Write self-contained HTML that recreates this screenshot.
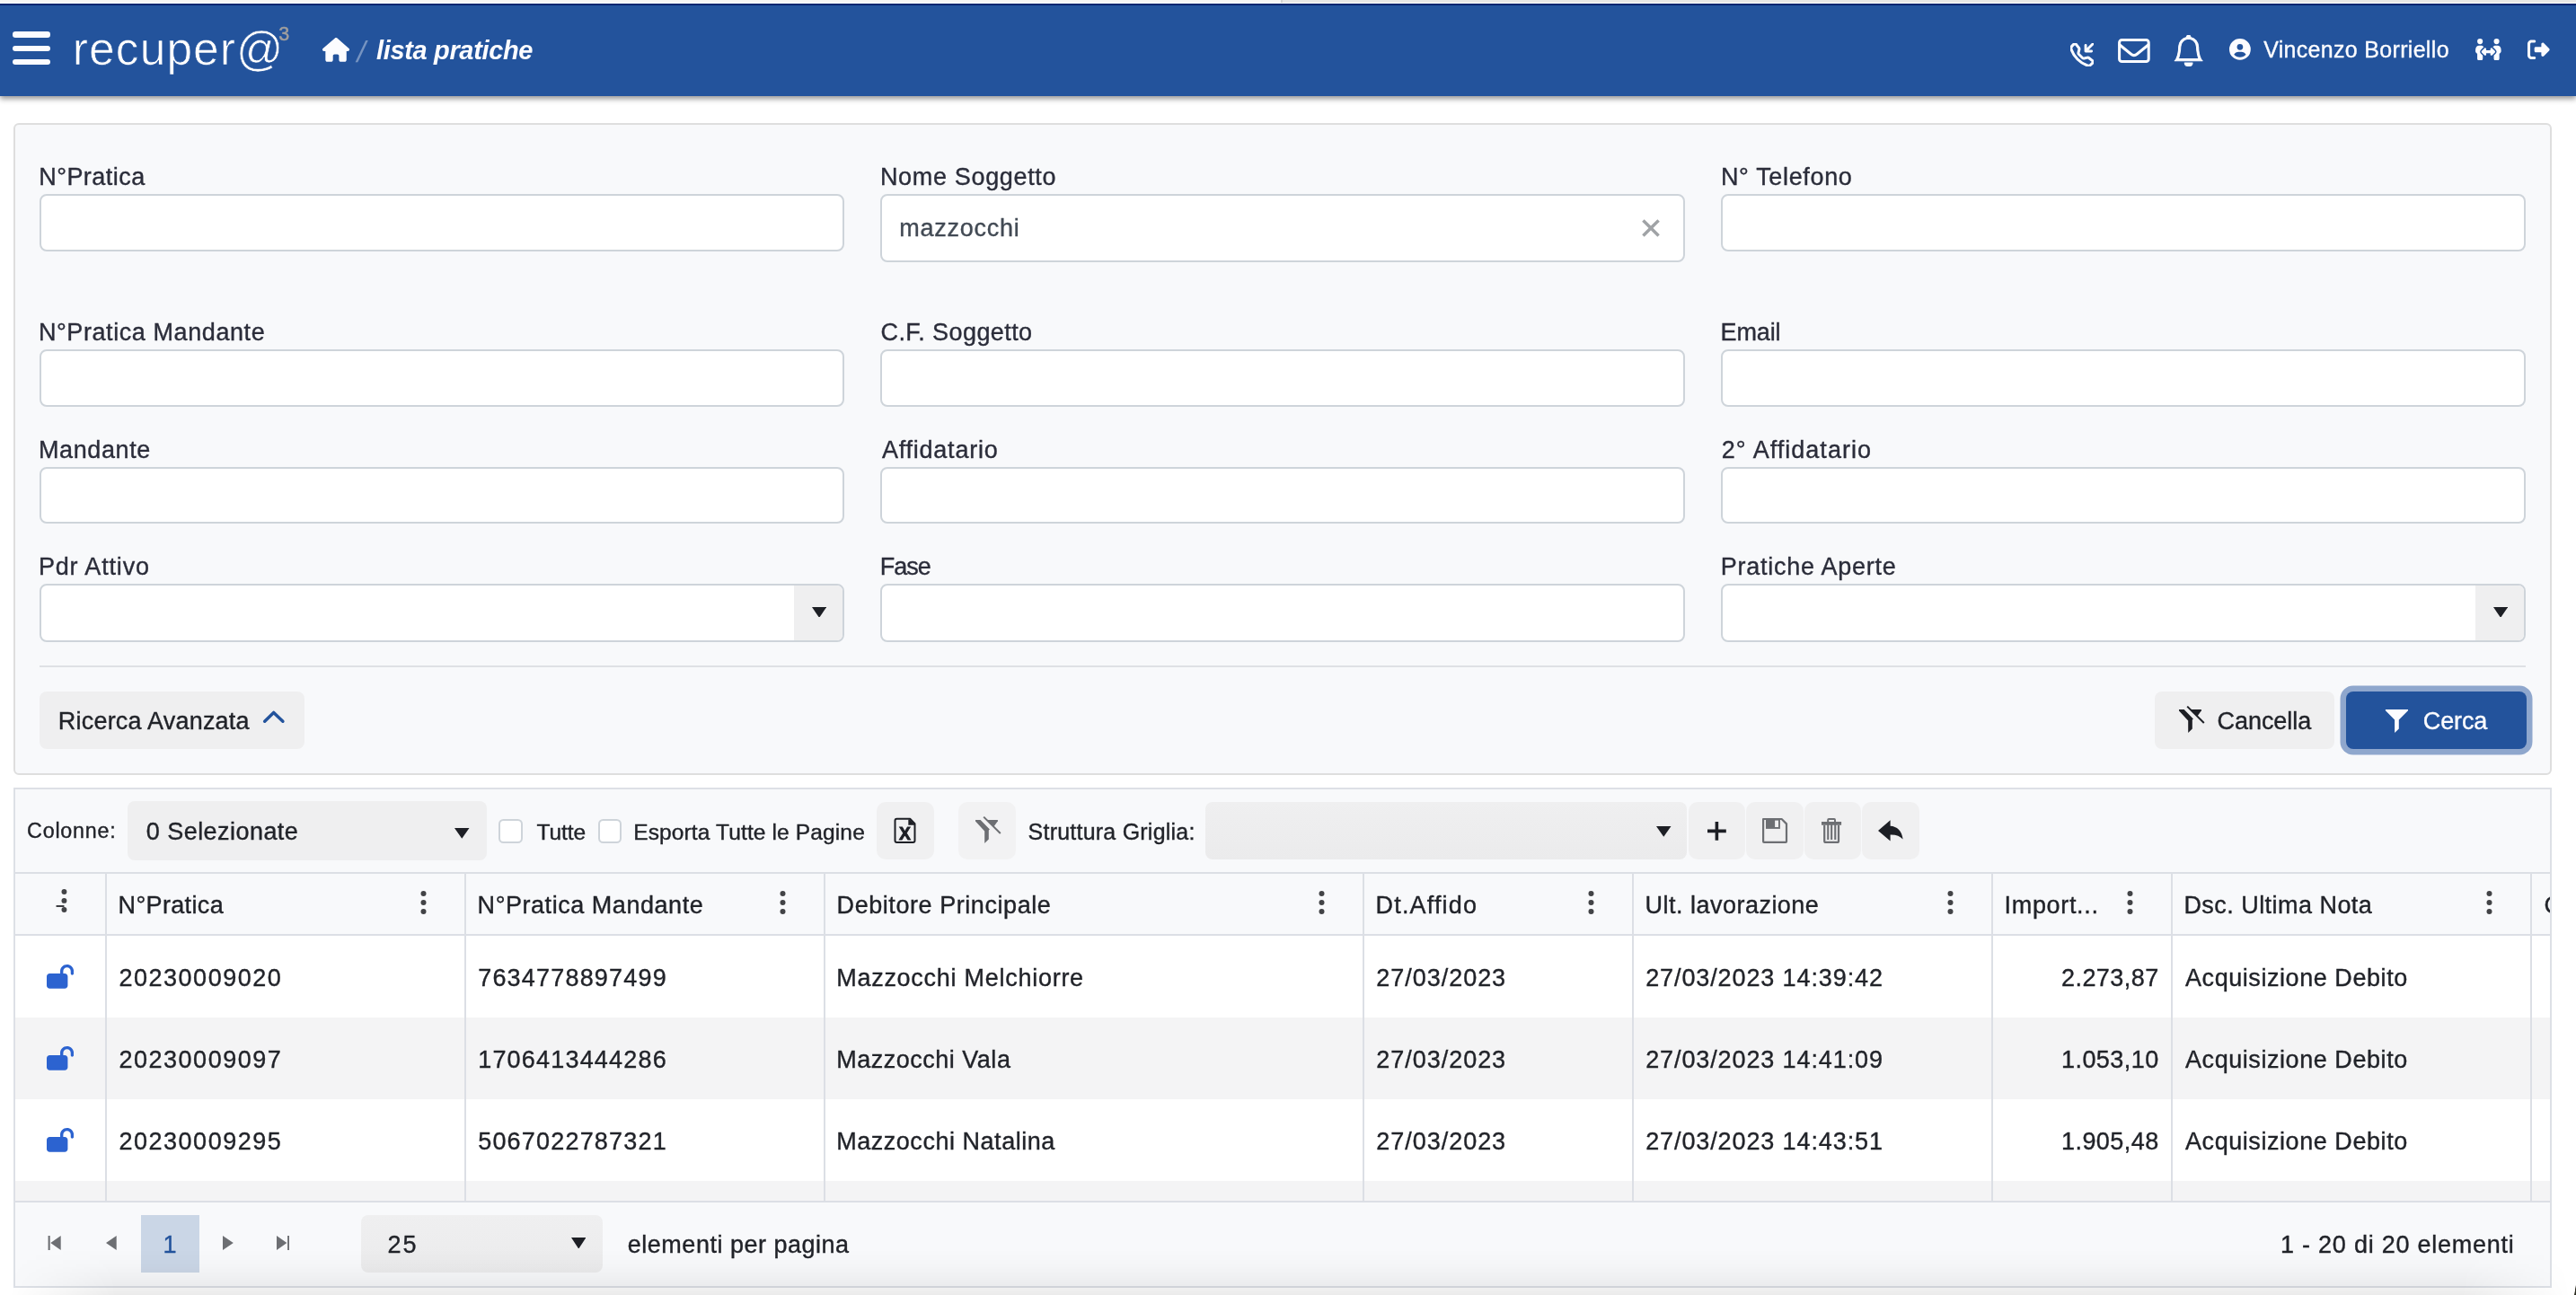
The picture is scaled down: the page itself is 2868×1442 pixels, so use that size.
<!DOCTYPE html>
<html lang="it">
<head>
<meta charset="utf-8">
<title>recuper@ - lista pratiche</title>
<style>
html,body{margin:0;padding:0;}
body{width:2868px;height:1442px;overflow:hidden;background:#fff;font-family:"Liberation Sans", sans-serif;position:relative;}
.b{position:absolute;box-sizing:border-box;display:block;}
.t{position:absolute;white-space:pre;display:block;-webkit-text-stroke:0.36px currentColor;}
.inp{background:#fff;border:2px solid #ced4da;border-radius:8px;}
.btn{background:#efeff0;border-radius:8px;}
th,td{padding:0;font-weight:normal;text-align:left;}
.panel{background:#f8f9fb;border:2px solid #dedede;border-radius:6px;}
</style>
</head>
<body>
<div id="app" class="b" style="left:0;top:0;width:2868px;height:1442px;will-change:transform">
<header class="b" style="left:0;top:0">
<div class="b " style="left:0px;top:0px;width:2868px;height:107px;background:#23539c;box-shadow:0 2.500px 6px rgba(0,0,0,.42);"></div>
<div class="b " style="left:0px;top:0px;width:2868px;height:4px;background:#fff"></div>
<div class="b " style="left:0px;top:0px;width:1426px;height:2.7px;background:#f5f5f3"></div>
<div class="b " style="left:1426px;top:0px;width:1442px;height:2.7px;background:#e7e7e5"></div>
<div class="b " style="left:1426px;top:0px;width:2px;height:2.7px;background:#d3d3d1"></div>
<div class="b " style="left:0px;top:4px;width:2868px;height:1.6px;background:#00256f"></div>
<div class="b " style="left:14px;top:35.4px;width:42px;height:6.3px;background:#fcfcff;border-radius:3.2px"></div>
<div class="b " style="left:14px;top:50.5px;width:42px;height:6.3px;background:#fcfcff;border-radius:3.2px"></div>
<div class="b " style="left:14px;top:65.6px;width:42px;height:6.3px;background:#fcfcff;border-radius:3.2px"></div>
<svg class="b" style="left:70px;top:20px" width="270" height="70" viewBox="0 0 270 70"><text x="10.8" y="51.7" font-family='"Liberation Sans", sans-serif' font-size="51.5" fill="#fff" stroke="#23539c" stroke-width="0.7" letter-spacing="1.1">recuper@</text><text x="240.2" y="25.4" font-family='"Liberation Sans", sans-serif' font-size="21.5" fill="#a09f9e" stroke="#a09f9e" stroke-width="0.5">3</text></svg>
<svg class="b" style="left:358.7px;top:42.4px;" width="30.1" height="26.75" viewBox="0 0 576 512"><path fill="#fcfcff" d="M575.8 255.5c0 18-15 32.1-32 32.1h-32l.7 160.2c0 2.700-.2 5.400-.5 8.100V472c0 22.100-17.900 40-40 40H456c-1.100 0-2.200 0-3.300-.1c-1.400.1-2.800.1-4.200.1H416 392c-22.100 0-40-17.900-40-40V448 384c0-17.700-14.300-32-32-32H256c-17.700 0-32 14.300-32 32v64 24c0 22.100-17.900 40-40 40H160 128.100c-1.500 0-3-.1-4.500-.2c-1.200.1-2.400.2-3.600.2H104c-22.100 0-40-17.900-40-40V360c0-.9 0-1.900.1-2.800V287.600H32c-18 0-32-14-32-32.100c0-9 3-17 10-24L266.400 8c7-7 15-8 22-8s15 2 21 7L564.800 231.500c8 7 12 15 11 24z"/></svg>
<span class="t raw" style="left:396.4px;top:42.17px;font-size:33px;line-height:32px;color:rgba(255,255,255,.38);transform:skewX(-11.500deg);transform-origin:0 80%;-webkit-text-stroke:0;">/</span>
<span class="t raw" style="left:419px;top:39.95px;font-size:29px;line-height:32px;color:#fcfcff;letter-spacing:-0.34px;font-weight:bold;font-style:italic;-webkit-text-stroke:0;">lista pratiche</span>
<svg class="b" style="left:2304.8px;top:47.6px;" width="26" height="26" viewBox="0 0 16 16"><path fill="#fcfcff" stroke="#fcfcff" stroke-width=".8" stroke-linejoin="round" d="M15.854.146a.5.5 0 0 1 0 .708L11.707 5H14.5a.5.5 0 0 1 0 1h-4a.5.5 0 0 1-.5-.5v-4a.5.5 0 0 1 1 0v2.793L15.146.146a.5.5 0 0 1 .708 0zm-12.2 1.182a.678.678 0 0 0-1.015-.063L1.605 2.3c-.483.484-.661 1.169-.45 1.77a17.568 17.568 0 0 0 4.168 6.608 17.569 17.569 0 0 0 6.608 4.168c.601.211 1.286.033 1.77-.45l1.034-1.034a.678.678 0 0 0-.063-1.015l-2.307-1.794a.678.678 0 0 0-.58-.122l-2.19.547a1.745 1.745 0 0 1-1.657-.459L5.482 8.062a1.745 1.745 0 0 1-.46-1.657l.548-2.19a.678.678 0 0 0-.122-.58L3.654 1.328zM1.884.511a1.745 1.745 0 0 1 2.612.163L6.29 2.98c.329.423.445.974.315 1.494l-.547 2.19a.678.678 0 0 0 .178.643l2.457 2.457a.678.678 0 0 0 .644.178l2.189-.547a1.745 1.745 0 0 1 1.494.315l2.306 1.794c.829.645.905 1.87.163 2.611l-1.034 1.034c-.74.74-1.846 1.065-2.877.702a18.634 18.634 0 0 1-7.01-4.42 18.634 18.634 0 0 1-4.42-7.009c-.362-1.03-.037-2.137.703-2.877L1.885.511z"/></svg>
<svg class="b" style="left:2356px;top:40px;" width="40" height="32" viewBox="2356 40 40 32"><rect x="2359.6" y="44.5" width="32.6" height="24.050" rx="2.800" fill="none" stroke="#fcfcff" stroke-width="3.050"/><path d="M2360,50 L2372.6,60.200 Q2375.9,62.900 2379.2,60.200 L2391.8,50" fill="none" stroke="#fcfcff" stroke-width="3.050" stroke-linejoin="round" stroke-linecap="round"/></svg>
<svg class="b" style="left:2419.1px;top:38.8px;" width="35.3" height="35.3" viewBox="0 0 16 16"><path fill="#fcfcff" stroke="#fcfcff" stroke-width=".46" stroke-linejoin="round" d="M8 16a2 2 0 0 0 2-2H6a2 2 0 0 0 2 2zM8 1.918l-.797.161A4.002 4.002 0 0 0 4 6c0 .628-.134 2.197-.459 3.742-.16.767-.376 1.566-.663 2.258h10.244c-.287-.692-.502-1.49-.663-2.258C12.134 8.197 12 6.628 12 6a4.002 4.002 0 0 0-3.203-3.92L8 1.917zM14.22 12c.223.447.481.801.78 1H1c.299-.199.557-.553.78-1C2.68 10.200 3 6.880 3 6c0-2.420 1.720-4.440 4.005-4.901a1 1 0 1 1 1.990 0A5.002 5.002 0 0 1 13 6c0 .880.320 4.200 1.220 6z"/></svg>
<svg class="b" style="left:2481.9px;top:42.9px;" width="23.8" height="23.8" viewBox="0 0 512 512"><path fill="#fcfcff" d="M399 384.200C376.900 345.800 335.400 320 288 320H224c-47.400 0-88.900 25.800-111 64.200c35.200 39.200 86.200 63.800 143 63.800s107.800-24.700 143-63.800zM0 256a256 256 0 1 1 512 0A256 256 0 1 1 0 256zm256 16a72 72 0 1 0 0-144 72 72 0 1 0 0 144z"/></svg>
<span class="t " style="left:2520.2px;top:39.11px;font-size:24.94px;line-height:32px;color:#fcfcff;letter-spacing:0.34px;">Vincenzo Borriello</span>
<svg class="b" style="left:2754.86px;top:42.7px;" width="30.72" height="24.58" viewBox="0 0 640 512"><path fill="#fcfcff" d="M64 64a64 64 0 1 1 128 0A64 64 0 1 1 64 64zM25.900 233.400C29.300 191.900 64 160 105.600 160h44.800c27 0 51 13.400 65.500 34.100c-2.700 1.900-5.200 4-7.500 6.300l-64 64c-21.900 21.900-21.900 57.300 0 79.200L192 391.200V464c0 26.500-21.500 48-48 48H112c-26.500 0-48-21.500-48-48V348.300c-26.500-9.500-44.700-35.800-42.200-65.600l4.100-49.300zM448 64a64 64 0 1 1 128 0A64 64 0 1 1 448 64zM431.600 200.400c-2.300-2.300-4.900-4.400-7.500-6.300c14.500-20.700 38.600-34.100 65.500-34.100h44.800c41.600 0 76.300 31.900 79.700 73.400l4.100 49.300c2.500 29.800-15.700 56.100-42.200 65.600V464c0 26.500-21.500 48-48 48H496c-26.500 0-48-21.500-48-48V391.200l47.600-47.600c21.900-21.900 21.900-57.300 0-79.200l-64-64zM272 240v32h96V240c0-9.700 5.800-18.500 14.800-22.200s19.300-1.700 26.200 5.200l64 64c9.400 9.400 9.400 24.600 0 33.900l-64 64c-6.900 6.900-17.200 8.900-26.200 5.200s-14.800-12.500-14.800-22.200V336H272v32c0 9.700-5.800 18.500-14.800 22.200s-19.300 1.700-26.200-5.200l-64-64c-9.400-9.400-9.400-24.600 0-33.900l64-64c6.900-6.900 17.200-8.900 26.200-5.200s14.800 12.500 14.800 22.200z"/></svg>
<svg class="b" style="left:2814.3px;top:42.66px;" width="24.6" height="24.6" viewBox="0 0 512 512"><path fill="#fcfcff" d="M377.9 105.900L500.700 228.700c7.200 7.200 11.300 17.100 11.300 27.300s-4.100 20.100-11.300 27.300L377.900 406.100c-6.400 6.400-15 9.900-24 9.900c-18.700 0-33.900-15.200-33.900-33.900l0-62.100-128 0c-17.700 0-32-14.300-32-32l0-64c0-17.700 14.300-32 32-32l128 0 0-62.100c0-18.700 15.200-33.900 33.900-33.900c9 0 17.600 3.600 24 9.900zM160 96L96 96c-17.700 0-32 14.300-32 32l0 256c0 17.700 14.300 32 32 32l64 0c17.700 0 32 14.300 32 32s-14.300 32-32 32l-64 0c-53 0-96-43-96-96L0 128C0 75 43 32 96 32l64 0c17.700 0 32 14.300 32 32s-14.300 32-32 32z"/></svg>
</header>
<form class="b" style="left:0;top:0" onsubmit="return false">
<div class="b panel" style="left:15px;top:137px;width:2826px;height:726px;"></div>
<label class="t lbl" style="left:43.199999999999996px;top:180.74px;font-size:27.0px;line-height:32px;color:#2b2d3a;letter-spacing:0.46px;">N°Pratica</label>
<div class="b inp" style="left:44px;top:216.4px;width:896px;height:63.2px;"></div>
<label class="t lbl" style="left:979.9px;top:180.74px;font-size:27.0px;line-height:32px;color:#2b2d3a;letter-spacing:0.67px;">Nome Soggetto</label>
<div class="b inp" style="left:980px;top:216.4px;width:896px;height:75.2px;"></div>
<label class="t lbl" style="left:1915.9px;top:180.74px;font-size:27.0px;line-height:32px;color:#2b2d3a;letter-spacing:0.66px;">N° Telefono</label>
<div class="b inp" style="left:1916px;top:216.4px;width:896px;height:63.2px;"></div>
<label class="t lbl" style="left:42.9px;top:353.74px;font-size:27.0px;line-height:32px;color:#2b2d3a;letter-spacing:0.58px;">N°Pratica Mandante</label>
<div class="b inp" style="left:44px;top:389.4px;width:896px;height:63.2px;"></div>
<label class="t lbl" style="left:980.5px;top:353.74px;font-size:27.0px;line-height:32px;color:#2b2d3a;letter-spacing:0.42px;">C.F. Soggetto</label>
<div class="b inp" style="left:980px;top:389.4px;width:896px;height:63.2px;"></div>
<label class="t lbl" style="left:1915.5px;top:353.74px;font-size:27.0px;line-height:32px;color:#2b2d3a;letter-spacing:-0.12px;">Email</label>
<div class="b inp" style="left:1916px;top:389.4px;width:896px;height:63.2px;"></div>
<label class="t lbl" style="left:42.9px;top:484.74px;font-size:27.0px;line-height:32px;color:#2b2d3a;letter-spacing:0.63px;">Mandante</label>
<div class="b inp" style="left:44px;top:520.3px;width:896px;height:63.2px;"></div>
<label class="t lbl" style="left:982.0px;top:484.74px;font-size:27.0px;line-height:32px;color:#2b2d3a;letter-spacing:0.76px;">Affidatario</label>
<div class="b inp" style="left:980px;top:520.3px;width:896px;height:63.2px;"></div>
<label class="t lbl" style="left:1916.8000000000002px;top:484.74px;font-size:27.0px;line-height:32px;color:#2b2d3a;letter-spacing:1.02px;">2° Affidatario</label>
<div class="b inp" style="left:1916px;top:520.3px;width:896px;height:63.2px;"></div>
<label class="t lbl" style="left:42.9px;top:614.74px;font-size:27.0px;line-height:32px;color:#2b2d3a;letter-spacing:0.84px;">Pdr Attivo</label>
<div class="b inp" style="left:44px;top:650.1px;width:896px;height:64.6px;"><span class="b" style="right:0;top:0;width:54px;height:60.6px;background:#efeff0;border-radius:0 6px 6px 0"></span><svg class="b" style="right:17.600px;top:23.500px" width="16.200" height="11.900" viewBox="0 0 16.200 11.900"><path fill="#1d1f25" d="M0 0H16.200L8.100 11.900Z"/></svg></div>
<label class="t lbl" style="left:979.8px;top:614.74px;font-size:27.0px;line-height:32px;color:#2b2d3a;letter-spacing:-1.01px;">Fase</label>
<div class="b inp" style="left:980px;top:650.1px;width:896px;height:64.6px;"></div>
<label class="t lbl" style="left:1915.8000000000002px;top:614.74px;font-size:27.0px;line-height:32px;color:#2b2d3a;letter-spacing:0.74px;">Pratiche Aperte</label>
<div class="b inp" style="left:1916px;top:650.1px;width:896px;height:64.6px;"><span class="b" style="right:0;top:0;width:54px;height:60.6px;background:#efeff0;border-radius:0 6px 6px 0"></span><svg class="b" style="right:17.600px;top:23.500px" width="16.200" height="11.900" viewBox="0 0 16.200 11.900"><path fill="#1d1f25" d="M0 0H16.200L8.100 11.900Z"/></svg></div>
<span class="t " style="left:1001.2px;top:238.44px;font-size:27.0px;line-height:32px;color:#424a54;letter-spacing:0.76px;">mazzocchi</span>
<svg class="b" style="left:1828px;top:244.2px;" width="20" height="20" viewBox="0 0 20 20"><path d="M1.400 1.400L18.600 18.600M18.600 1.400L1.400 18.600" stroke="#a0a3a6" stroke-width="3.500" fill="none"/></svg>
<div class="b " style="left:44px;top:741px;width:2768px;height:2px;background:#dfe1e5"></div>
<div class="b btn" style="left:44px;top:770.2px;width:295px;height:63.4px;"></div>
<span class="t " style="left:64.8px;top:786.94px;font-size:27.0px;line-height:32px;color:#212329;letter-spacing:0.21px;">Ricerca Avanzata</span>
<svg class="b" style="left:288px;top:788px;" width="34" height="22" viewBox="288 788 34 22"><path d="M294.700,803.200 L304.700,793.400 L314.900,803.200" stroke="#23539c" stroke-width="3.500" stroke-linecap="round" stroke-linejoin="round" fill="none"/></svg>
<div class="b btn" style="left:2399px;top:770.2px;width:200px;height:63.4px;"></div>
<svg class="b" style="left:2420px;top:780px;" width="40" height="40" viewBox="2420 780 40 40"><path fill="#1d1f25" d="M2426,790 H2431.6 L2441.9,800.400 L2440.8,801.400 V811.600 L2436.2,815.900 V802.400 L2426,791.500 Z"/><path fill="#1d1f25" d="M2439,790 H2450.9 V791.200 L2446.4,797.400 Z"/><path d="M2435.2,786.600 L2453.800,805" stroke="#1d1f25" stroke-width="2" fill="none"/></svg>
<span class="t " style="left:2468.6px;top:786.94px;font-size:27.0px;line-height:32px;color:#212329;letter-spacing:-0.07px;">Cancella</span>
<div class="b " style="left:2612px;top:770.2px;width:200.5px;height:63.4px;background:#23539c;border-radius:8px;box-shadow:0 0 0 6.500px #8fa7cd;"></div>
<svg class="b" style="left:2650px;top:785px;" width="36" height="36" viewBox="2650 785 36 36"><path fill="#fcfcff" d="M2655.9,790 H2681 V791.200 L2670.8,801.600 V811.500 L2666.1,816 V801.600 L2655.9,791.200 Z"/></svg>
<span class="t " style="left:2697.8px;top:786.94px;font-size:27.0px;line-height:32px;color:#fcfcff;letter-spacing:-0.13px;">Cerca</span>
</form>
<section class="b" style="left:0;top:0;width:2868px">
<div class="b " style="left:15px;top:877px;width:2826px;height:556.5px;background:#f8f9fb;border:2px solid #dde0e6;"></div>
<span class="t " style="left:30.1px;top:908.54px;font-size:23.27px;line-height:32px;color:#212329;letter-spacing:0.78px;">Colonne:</span>
<div class="b btn" style="left:142px;top:892px;width:400px;height:65.5px;"></div>
<span class="t " style="left:162.8px;top:909.64px;font-size:27.0px;line-height:32px;color:#212329;letter-spacing:0.45px;">0 Selezionate</span>
<svg class="b" style="left:506px;top:922px;" width="16.5" height="11.8" viewBox="0 0 16.500 11.800"><path fill="#1d1f25" d="M0 0H16.500L8.250 11.800Z"/></svg>
<div class="b " style="left:555.4px;top:912.4px;width:26.2px;height:26.4px;background:#fff;border:2px solid #ced4da;border-radius:5.500px"></div>
<span class="t " style="left:597.4px;top:910.99px;font-size:24.55px;line-height:32px;color:#212329;letter-spacing:-0.06px;">Tutte</span>
<div class="b " style="left:666.2px;top:912.4px;width:26.2px;height:26.4px;background:#fff;border:2px solid #ced4da;border-radius:5.500px"></div>
<span class="t " style="left:705.2px;top:910.99px;font-size:24.55px;line-height:32px;color:#212329;letter-spacing:0.11px;">Esporta Tutte le Pagine</span>
<div class="b " style="left:976.2px;top:893px;width:64px;height:64px;background:#f0f0f1;border-radius:10px"></div>
<svg class="b" style="left:990px;top:905px" width="36" height="40" viewBox="990 905 36 40"><path d="M998.500,911.800 H1013.200 L1018.500,917.100 V936 Q1018.500,938 1016.500,938 H998.500 Q996.500,938 996.500,936 V913.800 Q996.500,911.800 998.500,911.800 Z" fill="none" stroke="#1d1f25" stroke-width="2" stroke-linejoin="round"/><path d="M1011.300,912.600 H1013 L1018.500,918.100 V918.800 H1011.300 Z" fill="#1d1f25"/><text x="1007.400" y="934.600" text-anchor="middle" font-family='"Liberation Sans", sans-serif' font-weight="bold" font-size="19.300" fill="#1d1f25" stroke="#1d1f25" stroke-width="0.9">X</text></svg>
<div class="b " style="left:1067px;top:893px;width:64px;height:64px;background:#f2f2f3;border-radius:10px"></div>
<svg class="b" style="left:1080px;top:902.75px;" width="40" height="40" viewBox="2420 780 40 40"><path fill="#6d6f73" d="M2426,790 H2431.6 L2441.9,800.400 L2440.8,801.400 V811.600 L2436.2,815.900 V802.400 L2426,791.500 Z"/><path fill="#6d6f73" d="M2439,790 H2450.9 V791.200 L2446.4,797.400 Z"/><path d="M2435.2,786.600 L2453.800,805" stroke="#6d6f73" stroke-width="2" fill="none"/></svg>
<span class="t " style="left:1144.6px;top:909.86px;font-size:24.94px;line-height:32px;color:#212329;letter-spacing:0.25px;">Struttura Griglia:</span>
<div class="b " style="left:1342px;top:893px;width:536px;height:64px;background:linear-gradient(#efeff0,#ebebec);border-radius:8px"></div>
<svg class="b" style="left:1844px;top:920px;" width="16.5" height="11.8" viewBox="0 0 16.500 11.800"><path fill="#1d1f25" d="M0 0H16.500L8.250 11.800Z"/></svg>
<div class="b " style="left:1879.5px;top:893px;width:63.6px;height:64px;background:#f0f0f1;border-radius:10px"></div>
<div class="b " style="left:1944.3px;top:893px;width:63.6px;height:64px;background:#f0f0f1;border-radius:10px"></div>
<div class="b " style="left:2008.8px;top:893px;width:63.6px;height:64px;background:#f0f0f1;border-radius:10px"></div>
<div class="b " style="left:2073.2px;top:893px;width:63.6px;height:64px;background:#f0f0f1;border-radius:10px"></div>
<svg class="b" style="left:1901px;top:915px;" width="20.8" height="20.8" viewBox="0 0 20.800 20.800"><path d="M10.400 0V20.800M0 10.400H20.800" stroke="#1d1f25" stroke-width="3.600" fill="none"/></svg>
<svg class="b" style="left:1955px;top:905px;" width="42" height="40" viewBox="1955 905 42 40"><path d="M1963.100,912 H1983.600 L1989,917.400 V937 Q1989,937.900 1988.100,937.900 H1964 Q1963.100,937.900 1963.100,937 Z" fill="none" stroke="#6d6f73" stroke-width="2.200" stroke-linejoin="round"/><path fill="#6d6f73" d="M1966,912.500 H1981.900 V922.900 H1966 Z"/><path fill="#f0f0f1" d="M1976.100,913.600 H1980 V921 H1976.100 Z"/></svg>
<svg class="b" style="left:2020px;top:905px;" width="40" height="40" viewBox="2020 905 40 40"><path d="M2035.200,915.500 V912.900 Q2035.200,912 2036.100,912 H2042.100 Q2043,912 2043,912.900 V915.500" fill="none" stroke="#6d6f73" stroke-width="2"/><path fill="#6d6f73" d="M2028,915.100 H2050.100 V918.800 H2028 Z M2034.200,918.800 H2036.300 V934.900 H2034.200 Z M2038.100,918.800 H2040.200 V934.900 H2038.100 Z M2042.200,918.800 H2044.300 V934.900 H2042.200 Z"/><path d="M2031.200,918.800 V936.400 Q2031.200,937.900 2032.700,937.900 H2045.500 Q2047,937.900 2047,936.400 V918.800" fill="none" stroke="#6d6f73" stroke-width="2.200"/></svg>
<svg class="b" style="left:2085px;top:905px;" width="40" height="40" viewBox="2085 905 40 40"><path fill="#1d1f25" d="M2104.600,913.300 V919.800 C2112,920.200 2117.500,925 2118.600,934.600 C2115.500,931 2111,929.300 2104.600,929.500 V936.500 L2091,924.900 Z"/></svg>
<div role="table" class="b" style="left:0;top:0;width:2868px"><div role="rowgroup"><div role="row">
<div class="b " style="left:17px;top:971px;width:2822px;height:2px;background:#dcdfe5"></div>
<div class="b " style="left:17px;top:1040px;width:2822px;height:2px;background:#dcdfe5"></div>
<div role="columnheader">
<svg class="b" style="left:61.5px;top:990px;" width="14" height="28" viewBox="0 0 14 28"><g fill="#434447"><circle cx="9.450" cy="2.970" r="2.950"/><circle cx="9.450" cy="12.900" r="2.950"/><circle cx="9.450" cy="23" r="2.950"/></g><path d="M0.550 18.200H9.450V19.800H0.550Z" fill="#0e1015"/></svg>
</div>
<div role="columnheader"><span class="t " style="left:131.6px;top:991.64px;font-size:27.0px;line-height:32px;color:#212329;letter-spacing:0.34px;">N°Pratica</span>
<svg class="b" style="left:467.5px;top:991px;" width="7" height="28" viewBox="0 0 7 28"><g fill="#424346"><circle cx="3.500" cy="4" r="3"/><circle cx="3.500" cy="14" r="3"/><circle cx="3.500" cy="24" r="3"/></g></svg></div>
<div role="columnheader"><span class="t " style="left:531.6px;top:991.64px;font-size:27.0px;line-height:32px;color:#212329;letter-spacing:0.54px;">N°Pratica Mandante</span>
<svg class="b" style="left:867.5px;top:991px;" width="7" height="28" viewBox="0 0 7 28"><g fill="#424346"><circle cx="3.500" cy="4" r="3"/><circle cx="3.500" cy="14" r="3"/><circle cx="3.500" cy="24" r="3"/></g></svg></div>
<div role="columnheader"><span class="t " style="left:931.6px;top:991.64px;font-size:27.0px;line-height:32px;color:#212329;letter-spacing:0.56px;">Debitore Principale</span>
<svg class="b" style="left:1467.5px;top:991px;" width="7" height="28" viewBox="0 0 7 28"><g fill="#424346"><circle cx="3.500" cy="4" r="3"/><circle cx="3.500" cy="14" r="3"/><circle cx="3.500" cy="24" r="3"/></g></svg></div>
<div role="columnheader"><span class="t " style="left:1531.6px;top:991.64px;font-size:27.0px;line-height:32px;color:#212329;letter-spacing:1.16px;">Dt.Affido</span>
<svg class="b" style="left:1767.5px;top:991px;" width="7" height="28" viewBox="0 0 7 28"><g fill="#424346"><circle cx="3.500" cy="4" r="3"/><circle cx="3.500" cy="14" r="3"/><circle cx="3.500" cy="24" r="3"/></g></svg></div>
<div role="columnheader"><span class="t " style="left:1831.6px;top:991.64px;font-size:27.0px;line-height:32px;color:#212329;letter-spacing:0.48px;">Ult. lavorazione</span>
<svg class="b" style="left:2167.5px;top:991px;" width="7" height="28" viewBox="0 0 7 28"><g fill="#424346"><circle cx="3.500" cy="4" r="3"/><circle cx="3.500" cy="14" r="3"/><circle cx="3.500" cy="24" r="3"/></g></svg></div>
<div role="columnheader"><span class="t " style="left:2231.6px;top:991.64px;font-size:27.0px;line-height:32px;color:#212329;letter-spacing:0.66px;">Import...</span>
<svg class="b" style="left:2367.5px;top:991px;" width="7" height="28" viewBox="0 0 7 28"><g fill="#424346"><circle cx="3.500" cy="4" r="3"/><circle cx="3.500" cy="14" r="3"/><circle cx="3.500" cy="24" r="3"/></g></svg></div>
<div role="columnheader"><span class="t " style="left:2431.4px;top:991.64px;font-size:27.0px;line-height:32px;color:#212329;letter-spacing:0.46px;">Dsc. Ultima Nota</span>
<svg class="b" style="left:2767.5px;top:991px;" width="7" height="28" viewBox="0 0 7 28"><g fill="#424346"><circle cx="3.500" cy="4" r="3"/><circle cx="3.500" cy="14" r="3"/><circle cx="3.500" cy="24" r="3"/></g></svg></div>
<div role="columnheader"><div class="b " style="left:2819px;top:973px;width:20px;height:67px;overflow:hidden"><span class="t " style="left:13.5px;top:18.64px;font-size:27.0px;line-height:32px;color:#212329;letter-spacing:0.26px;">C</span></div></div>
</div></div><div role="rowgroup">
<div role="row">
<div class="b " style="left:17px;top:1042px;width:2822px;height:91px;background:#fff"></div>
<div role="cell"><svg class="b" style="left:52.2px;top:1074.4px;" width="30.1" height="26.75" viewBox="0 0 576 512"><path fill="#2c63d0" d="M352 144c0-44.200 35.800-80 80-80s80 35.800 80 80v48c0 17.700 14.300 32 32 32s32-14.300 32-32V144C576 64.500 511.500 0 432 0S288 64.500 288 144v48H64c-35.300 0-64 28.700-64 64V448c0 35.300 28.700 64 64 64H384c35.300 0 64-28.700 64-64V256c0-35.300-28.700-64-64-64H352V144z"/></svg></div>
<div role="cell"><span class="t " style="left:132.6px;top:1072.64px;font-size:27.0px;line-height:32px;color:#212329;letter-spacing:1.49px;">20230009020</span></div>
<div role="cell"><span class="t " style="left:532.2px;top:1072.64px;font-size:27.0px;line-height:32px;color:#212329;letter-spacing:1.19px;">7634778897499</span></div>
<div role="cell"><span class="t " style="left:931.2px;top:1072.64px;font-size:27.0px;line-height:32px;color:#212329;letter-spacing:0.73px;">Mazzocchi Melchiorre</span></div>
<div role="cell"><span class="t " style="left:1532.2px;top:1072.64px;font-size:27.0px;line-height:32px;color:#212329;letter-spacing:0.98px;">27/03/2023</span></div>
<div role="cell"><span class="t " style="left:1832.2px;top:1072.64px;font-size:27.0px;line-height:32px;color:#212329;letter-spacing:0.89px;">27/03/2023 14:39:42</span></div>
<div role="cell"><span class="t " style="right:464.4000000000001px;top:1072.64px;font-size:27.0px;line-height:32px;color:#212329;letter-spacing:0.44px;">2.273,87</span></div>
<div role="cell"><span class="t " style="left:2433px;top:1072.64px;font-size:27.0px;line-height:32px;color:#212329;letter-spacing:0.56px;">Acquisizione Debito</span></div>
</div>
<div role="row">
<div class="b " style="left:17px;top:1133px;width:2822px;height:91px;background:#f4f4f5"></div>
<div role="cell"><svg class="b" style="left:52.2px;top:1165.4px;" width="30.1" height="26.75" viewBox="0 0 576 512"><path fill="#2c63d0" d="M352 144c0-44.200 35.800-80 80-80s80 35.800 80 80v48c0 17.700 14.300 32 32 32s32-14.300 32-32V144C576 64.500 511.500 0 432 0S288 64.500 288 144v48H64c-35.300 0-64 28.700-64 64V448c0 35.300 28.700 64 64 64H384c35.300 0 64-28.700 64-64V256c0-35.300-28.700-64-64-64H352V144z"/></svg></div>
<div role="cell"><span class="t " style="left:132.6px;top:1163.64px;font-size:27.0px;line-height:32px;color:#212329;letter-spacing:1.49px;">20230009097</span></div>
<div role="cell"><span class="t " style="left:532.2px;top:1163.64px;font-size:27.0px;line-height:32px;color:#212329;letter-spacing:1.19px;">1706413444286</span></div>
<div role="cell"><span class="t " style="left:931.2px;top:1163.64px;font-size:27.0px;line-height:32px;color:#212329;letter-spacing:0.51px;">Mazzocchi Vala</span></div>
<div role="cell"><span class="t " style="left:1532.2px;top:1163.64px;font-size:27.0px;line-height:32px;color:#212329;letter-spacing:0.98px;">27/03/2023</span></div>
<div role="cell"><span class="t " style="left:1832.2px;top:1163.64px;font-size:27.0px;line-height:32px;color:#212329;letter-spacing:0.89px;">27/03/2023 14:41:09</span></div>
<div role="cell"><span class="t " style="right:464.4000000000001px;top:1163.64px;font-size:27.0px;line-height:32px;color:#212329;letter-spacing:0.44px;">1.053,10</span></div>
<div role="cell"><span class="t " style="left:2433px;top:1163.64px;font-size:27.0px;line-height:32px;color:#212329;letter-spacing:0.56px;">Acquisizione Debito</span></div>
</div>
<div role="row">
<div class="b " style="left:17px;top:1224px;width:2822px;height:91px;background:#fff"></div>
<div role="cell"><svg class="b" style="left:52.2px;top:1256.4px;" width="30.1" height="26.75" viewBox="0 0 576 512"><path fill="#2c63d0" d="M352 144c0-44.200 35.800-80 80-80s80 35.800 80 80v48c0 17.700 14.300 32 32 32s32-14.300 32-32V144C576 64.500 511.500 0 432 0S288 64.500 288 144v48H64c-35.300 0-64 28.700-64 64V448c0 35.300 28.700 64 64 64H384c35.300 0 64-28.700 64-64V256c0-35.300-28.700-64-64-64H352V144z"/></svg></div>
<div role="cell"><span class="t " style="left:132.6px;top:1254.64px;font-size:27.0px;line-height:32px;color:#212329;letter-spacing:1.49px;">20230009295</span></div>
<div role="cell"><span class="t " style="left:532.2px;top:1254.64px;font-size:27.0px;line-height:32px;color:#212329;letter-spacing:1.19px;">5067022787321</span></div>
<div role="cell"><span class="t " style="left:931.2px;top:1254.64px;font-size:27.0px;line-height:32px;color:#212329;letter-spacing:0.53px;">Mazzocchi Natalina</span></div>
<div role="cell"><span class="t " style="left:1532.2px;top:1254.64px;font-size:27.0px;line-height:32px;color:#212329;letter-spacing:0.98px;">27/03/2023</span></div>
<div role="cell"><span class="t " style="left:1832.2px;top:1254.64px;font-size:27.0px;line-height:32px;color:#212329;letter-spacing:0.89px;">27/03/2023 14:43:51</span></div>
<div role="cell"><span class="t " style="right:464.4000000000001px;top:1254.64px;font-size:27.0px;line-height:32px;color:#212329;letter-spacing:0.44px;">1.905,48</span></div>
<div role="cell"><span class="t " style="left:2433px;top:1254.64px;font-size:27.0px;line-height:32px;color:#212329;letter-spacing:0.56px;">Acquisizione Debito</span></div>
</div>
</div></div>
<div class="b " style="left:17px;top:1315px;width:2822px;height:22px;background:#f4f4f5"></div>
<div class="b " style="left:117px;top:973px;width:2px;height:364px;background:#dcdfe5"></div>
<div class="b " style="left:517px;top:973px;width:2px;height:364px;background:#dcdfe5"></div>
<div class="b " style="left:917px;top:973px;width:2px;height:364px;background:#dcdfe5"></div>
<div class="b " style="left:1517px;top:973px;width:2px;height:364px;background:#dcdfe5"></div>
<div class="b " style="left:1817px;top:973px;width:2px;height:364px;background:#dcdfe5"></div>
<div class="b " style="left:2217px;top:973px;width:2px;height:364px;background:#dcdfe5"></div>
<div class="b " style="left:2417px;top:973px;width:2px;height:364px;background:#dcdfe5"></div>
<div class="b " style="left:2817px;top:973px;width:2px;height:364px;background:#dcdfe5"></div>
<div class="b " style="left:17px;top:1337px;width:2822px;height:2px;background:#dcdfe5"></div>
<div class="b " style="left:17px;top:1339px;width:2822px;height:92px;background:#f8f9fb"></div>
<nav class="b" style="left:0;top:0;width:2868px">
<svg class="b" style="left:53.4px;top:1376.1px;" width="15.6" height="15.9" viewBox="0 0 15.600 15.900"><path fill="#6d6f73" d="M0.600 0H2.700V15.900H0.600ZM14.700 0V15.900L3.300 7.950Z"/></svg>
<svg class="b" style="left:118.4px;top:1376.1px;" width="11.7" height="15.9" viewBox="0 0 11.700 15.900"><path fill="#6d6f73" d="M11.700 0V15.900L0 7.950Z"/></svg>
<div class="b " style="left:157px;top:1353.1px;width:65px;height:63.7px;background:#cad6e6"></div>
<span class="t " style="left:181.5px;top:1369.94px;font-size:27.0px;line-height:32px;color:#23539c;letter-spacing:0.26px;">1</span>
<svg class="b" style="left:248px;top:1376.1px;" width="11.8" height="15.9" viewBox="0 0 11.800 15.900"><path fill="#6d6f73" d="M0 0V15.900L11.800 7.950Z"/></svg>
<svg class="b" style="left:308px;top:1376.1px;" width="14.4" height="15.9" viewBox="0 0 14.400 15.900"><path fill="#6d6f73" d="M12.100 0H14.200V15.900H12.100ZM0 0V15.900L11.400 7.950Z"/></svg>
<div class="b " style="left:402.4px;top:1353px;width:268.4px;height:64px;background:linear-gradient(#efeff0,#ebebec);border-radius:8px"></div>
<span class="t " style="left:431.6px;top:1369.94px;font-size:27.0px;line-height:32px;color:#212329;letter-spacing:1.86px;">25</span>
<svg class="b" style="left:635.5px;top:1377.5px;" width="16.5" height="12.6" viewBox="0 0 16.500 12.600"><path fill="#1d1f25" d="M0 0H16.500L8.250 12.600Z"/></svg>
<span class="t " style="left:698.8px;top:1369.94px;font-size:27.0px;line-height:32px;color:#212329;letter-spacing:0.51px;">elementi per pagina</span>
<span class="t " style="right:68.5px;top:1369.94px;font-size:27.0px;line-height:32px;color:#212329;letter-spacing:0.75px;">1 - 20 di 20 elementi</span>
</nav>
</section>
<div class="b " style="left:0px;top:1390px;width:2868px;height:52px;background:linear-gradient(rgba(0,0,0,0) 0,rgba(0,0,0,.014) 20px,rgba(0,0,0,.05) 41px,rgba(0,0,0,.08) 52px);-webkit-mask-image:linear-gradient(to right,transparent 10px,#000 130px,#000 2740px,transparent 2862px);mask-image:linear-gradient(to right,transparent 10px,#000 130px,#000 2740px,transparent 2862px);pointer-events:none"></div>
<div class="b " style="left:2864px;top:1430px;width:4px;height:12px;background:linear-gradient(99deg,rgba(44,44,32,0) 62%,#2c2c20 74%)"></div>
</div>
</body>
</html>
